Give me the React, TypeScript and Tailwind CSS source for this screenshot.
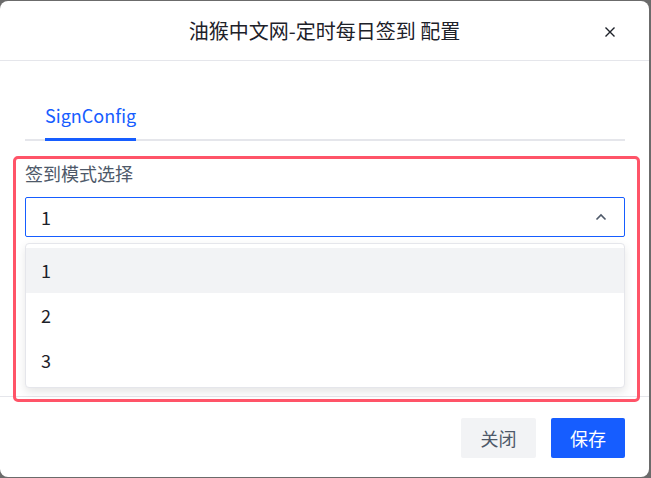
import React from 'react';

const FONT = { fontFamily: '"Noto Sans CJK SC", "Noto Sans", Inter, sans-serif' };

const options = ['1', '2', '3'];

export default function App() {
  return (
    <div className="relative h-[478px] w-[651px] overflow-hidden bg-[#6b6b6b]" style={FONT}>
      <div className="relative mt-px flex h-[476px] w-[649px] flex-col rounded-lg bg-white">
        {/* Header */}
        <div className="relative flex h-[60px] shrink-0 items-center justify-center border-b border-[#e5e6eb]">
          <span className="text-[20px] leading-7 text-[#1d2129]">油猴中文网-定时每日签到 配置</span>
          <button className="absolute right-[33px] top-[25px] flex h-3 w-3 items-center justify-center">
            <svg width="12" height="12" viewBox="0 0 12 12" fill="none" stroke="#1d2129" strokeWidth="1.4">
              <path d="M1.5 1.5l9 9M10.5 1.5l-9 9" />
            </svg>
          </button>
        </div>

        {/* Body */}
        <div className="relative flex-1 pl-[25px] pt-[41px]">
          <div className="w-[600px]">
            <div className="relative flex border-b-2 border-[#e5e6eb]">
              <div className="relative ml-[20px] pb-[11px] text-[18px] leading-[26px] text-[#165dff]">
                SignConfig
                <div className="absolute -bottom-[2px] left-0 right-0 h-[3px] bg-[#165dff]" />
              </div>
            </div>

            <div className="relative mt-[19px]">
              <div className="text-[18px] leading-[26px] text-[#4e5969]">签到模式选择</div>
              <div className="mt-[11px] flex h-[40px] items-center justify-between rounded-[2px] border border-[#165dff] pl-[15px] pr-[17px]">
                <span className="text-[18px] text-[#1d2129]">1</span>
                <svg width="12" height="8" viewBox="0 0 12 8" fill="none" stroke="#4e5969" strokeWidth="1.6">
                  <path d="M1.5 6.5L6 2l4.5 4.5" />
                </svg>
              </div>

              {/* Dropdown popup */}
              <div className="absolute left-0 right-0 top-[83px] z-10 rounded-[4px] border border-[#e5e6eb] bg-white py-[4px] shadow-[0_4px_10px_rgba(0,0,0,0.1)]">
                {options.map((o, i) => (
                  <div
                    key={o}
                    className={
                      'flex h-[45px] items-center pl-[15px] text-[18px] text-[#1d2129] ' +
                      (i === 0 ? 'bg-[#f2f3f5]' : '')
                    }
                  >
                    {o}
                  </div>
                ))}
              </div>
            </div>
          </div>
        </div>

        {/* Footer */}
        <div className="flex h-[81px] shrink-0 items-start justify-end gap-[15px] border-t border-[#e5e6eb] pr-[24px] pt-[21px]">
          <button className="flex h-[40px] w-[75px] items-center justify-center rounded-[2px] bg-[#f2f3f5] text-[18px] text-[#4e5969]">
            关闭
          </button>
          <button className="flex h-[40px] w-[74px] items-center justify-center rounded-[2px] bg-[#165dff] text-[18px] text-white">
            保存
          </button>
        </div>

        {/* inspector highlight */}
        <div className="pointer-events-none absolute left-[13px] top-[155px] z-20 h-[246px] w-[627px] rounded-[5px] border-[3px] border-[#ff5468]" />
      </div>
    </div>
  );
}
